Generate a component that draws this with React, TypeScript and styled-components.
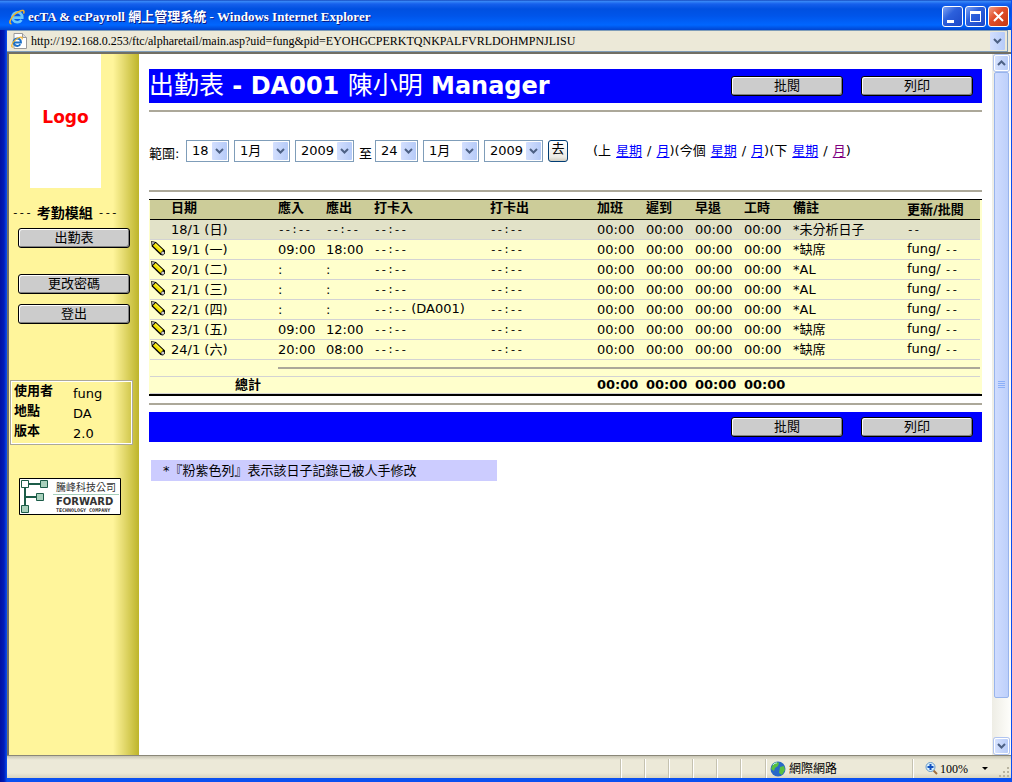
import React from "react";
import styled, { createGlobalStyle } from "styled-components";

const sans = `"DejaVu Sans", "Noto Sans CJK TC", sans-serif`;
const serif = `"Liberation Serif", "Noto Sans CJK TC", serif`;

const GlobalStyle = createGlobalStyle`
  * { box-sizing: border-box; }
  body { margin: 0; font: 13px/18px ${sans}; color: #000; background: #fff; }
  button, select { font: inherit; color: inherit; }
`;

const Window = styled.div`
  display: flex;
  flex-direction: column;
  min-height: 100vh;
  border: solid #0a2bd0;
  border-width: 0 1px 4px 7px;
  border-image: linear-gradient(90deg, #0010a0 0, #001cb8 4px, #0a50f0 7px, #0a50f0 100%) 0 1 4 7;
  background: #ece9d8;
`;

const TitleBar = styled.header`
  display: flex;
  align-items: center;
  gap: 2px;
  height: 30px;
  margin-left: -7px;
  padding: 3px 2px 0 9px;
  background: linear-gradient(#0831a8 0, #3b8cf8 1px, #1660ec 4px, #0050e0 9px, #0055ea 16px, #0066ff 25px, #0045d0 30px);
`;

const WindowTitle = styled.h1`
  flex: 1;
  margin: 0;
  padding-left: 1px;
  font: bold 13px/18px ${serif};
  color: #fff;
  text-shadow: 1px 1px #0a1883;
  white-space: nowrap;
`;

const CaptionButton = styled.button<{ $danger?: boolean }>`
  display: flex;
  width: 21px;
  height: 21px;
  padding: 0;
  border: 1px solid #fff;
  border-radius: 3px;
  background: ${(p) =>
    p.$danger
      ? "linear-gradient(135deg, #f0a088, #e2502c 40%, #c83810)"
      : "linear-gradient(135deg, #7ea4f4, #2c60dc 40%, #1c48c8)"};
`;

const AddressBar = styled.div`
  display: flex;
  align-items: center;
  gap: 4px;
  height: 22px;
  margin-right: 3px;
  padding: 0 2px 0 4px;
  border: solid #7f9db9;
  border-width: 1px 1px 1px 0;
  font: 12px/16px ${serif};
`;

const Url = styled.span`
  flex: 1;
  white-space: nowrap;
`;

const ArrowBox = styled.span`
  display: flex;
  align-items: center;
  justify-content: center;
  width: 15px;
  height: 18px;
  border-radius: 1px;
  background: linear-gradient(90deg, #d3dffe, #b6cbf8);
  pointer-events: none;
`;

const Body = styled.div`
  display: flex;
  flex: 1;
  border: solid #716f64;
  border-width: 2px 0 0 2px;
  background: #fff;
`;

const Sidebar = styled.nav`
  display: flex;
  flex-direction: column;
  align-items: flex-start;
  flex: none;
  width: 130px;
  background: linear-gradient(90deg, #fff59b 104px, #e6dc72 114px, #beb52a 130px);
`;

const LogoBox = styled.div`
  width: 71px;
  height: 134px;
  margin-left: 21px;
  background: #fff;
  color: #f00;
  font: bold 17px/126px ${sans};
  text-align: center;
`;

const Dashes = styled.span`
  font-family: "Liberation Mono", monospace;
  font-size: 11px;
  font-weight: normal;
`;

const ModuleHeading = styled.h2`
  display: flex;
  gap: 5px;
  margin: 16px 0 6px 3px;
  font-size: 14px;
  line-height: 18px;
`;

const PushButton = styled.button`
  width: 112px;
  height: 20px;
  padding: 0;
  border: 1px solid #000;
  border-radius: 3px;
  background: #ccc;
  box-shadow: inset 1px 1px #fff, inset -1px -1px #808080;
  font-size: 13px;
  line-height: 16px;
`;

const Menu = styled.div`
  display: flex;
  flex-direction: column;
  gap: 10px;
  margin-left: 9px;
  & > :first-child { margin-bottom: 16px; }
`;

const InfoBox = styled.dl`
  display: grid;
  grid-template-columns: 59px 1fr;
  grid-auto-rows: 20px;
  width: 123px;
  height: 65px;
  margin: 56px 0 33px 1px;
  padding: 1px 3px;
  border: 1px solid #aca899;
  box-shadow: inset 1px 1px #fff, inset -1px -1px #fff;
  & > dt { font-weight: bold; }
  & > dd { margin: 0; line-height: 24px; }
`;

const CompanyLogo = styled.svg`
  margin-left: 10px;
`;

const Main = styled.main`
  display: flex;
  flex-direction: column;
  flex: 1;
  min-width: 0;
  padding: 15px 10px;
`;

const Banner = styled.div<{ $tall?: boolean }>`
  display: flex;
  align-items: center;
  gap: 18px;
  height: ${(p) => (p.$tall ? 34 : 30)}px;
  padding-right: 9px;
  background: #00f;
`;

const PageTitle = styled.h2`
  flex: 1;
  margin: 0;
  color: #fff;
  font-size: 24px;
  line-height: 30px;
  white-space: nowrap;
  & > span { font-size: 25px; font-weight: normal; }
`;

const Rule = styled.hr`
  width: 100%;
  height: 2px;
  margin: 7px 0;
  border: 0;
  background: #aca899;
`;

const RangeForm = styled.form`
  display: flex;
  align-items: center;
  gap: 5px;
  height: 22px;
  margin: 21px 0;
  white-space: nowrap;
`;

const RangeText = styled.label<{ $width: number }>`
  width: ${(p) => p.$width}px;
  padding-top: 5px;
`;

const SelectFrame = styled.span<{ $width: number }>`
  display: inline-grid;
  align-items: center;
  width: ${(p) => p.$width}px;
  border: 1px solid #7f9db9;
  & > * { grid-area: 1 / 1; }
  & > span { justify-self: end; margin-right: 1px; }
  & > select {
    appearance: none;
    height: 20px;
    padding: 0 0 0 5px;
    border: 0;
    background: #fff;
  }
`;

const GoButton = styled.button`
  width: 20px;
  height: 22px;
  padding: 0 0 4px;
  border: 1px solid #003c74;
  border-radius: 3px;
  background: linear-gradient(#fff, #ecebe5 80%, #d0cdc0);
  line-height: 16px;
`;

const Shortcuts = styled.div`
  display: flex;
  margin-left: 20px;
  & > span { display: flex; gap: 5px; }
`;

const Link = styled.a<{ $visited?: boolean }>`
  color: ${(p) => (p.$visited ? "#800080" : "#00f")};
  text-underline-offset: 2px;
`;

const Sheet = styled.table`
  width: 100%;
  table-layout: fixed;
  border-spacing: 0;
  padding: 0 2px 0 1px;
  border: solid #000;
  border-width: 1px 0 2px;
  background: #ffc;
  line-height: 17px;
  white-space: nowrap;
  & td, & th {
    height: 20px;
    padding: 0;
    border-bottom: 1px solid #d3d3d3;
    text-align: left;
  }
  & svg { display: block; }
`;

const HeadRow = styled.tr`
  background: #cc9;
  & > th {
    border-bottom-color: #000;
    line-height: 16px;
    vertical-align: top;
  }
  & > th:last-child { line-height: 19px; }
`;

const DayRow = styled.tr<{ $rest?: boolean }>`
  background: ${(p) => (p.$rest ? "#e2e2c8" : "transparent")};
  & > td:first-child { padding: 1px 0 0 1px; vertical-align: top; }
`;

const SumRow = styled.tr`
  & > td, & > th { height: 17px; line-height: 16px; font-weight: bold; }
  & > th { padding-right: 17px; text-align: right; }
  & > td > hr { margin: 0; }
`;

const Note = styled.p`
  width: 346px;
  max-width: 100%;
  margin: 18px 0 0 2px;
  padding-left: 12px;
  background: #ccf;
  line-height: 21px;
`;

const ScrollTrack = styled.div`
  display: flex;
  flex-direction: column;
  flex: none;
  width: 19px;
  padding: 1px 2px 1px 2px;
  background: linear-gradient(90deg, #eeede5, #fefefb);
`;

const ScrollButton = styled.button`
  display: flex;
  align-items: center;
  justify-content: center;
  height: 16px;
  padding: 0;
  border: 1px solid #fff;
  border-radius: 2px;
  background: linear-gradient(90deg, #d6e2fe, #b8ccf8);
  box-shadow: 0 0 0 1px #b0c4f0;
`;

const ScrollRoom = styled.div`
  flex: 1;
  padding-top: 1px;
`;

const Thumb = styled.div`
  display: flex;
  align-items: center;
  justify-content: center;
  height: 94%;
  border: 1px solid #98b4ec;
  border-radius: 2px;
  background: linear-gradient(90deg, #d0dcfe, #bdd0fb);
`;

const StatusBar = styled.footer`
  display: flex;
  align-items: stretch;
  justify-content: flex-end;
  height: 23px;
  padding-top: 3px;
  border-top: 1px solid #8a8778;
  background: linear-gradient(#c8c5b4, #ece9d8 4px, #ece9d8 17px, #d8d4c0);
  font: 12px/18px ${serif};
`;

const StatusCell = styled.div<{ $width: number }>`
  display: flex;
  align-items: center;
  gap: 3px;
  width: ${(p) => p.$width}px;
  padding-left: 4px;
  border-left: 1px solid #c5c2b0;
  box-shadow: inset 1px 0 #fff;
`;

const Zoom = styled(StatusCell)`
  gap: 2px;
  padding-left: 12px;
  & > :nth-child(3) { margin-left: 12px; }
  & > :last-child { align-self: flex-end; margin-left: 9px; }
`;

const Chevron = ({ up }: { up?: boolean }) => (
  <svg width="9" height="6" viewBox="0 0 9 6">
    <path d={up ? "M1 5 4.500 1.500 8 5" : "M1 1 4.500 4.500 8 1"} fill="none" stroke="#4d6185" strokeWidth="2" />
  </svg>
);

const IeMark = ({ size, page }: { size: number; page?: boolean }) => (
  <svg width={size} height={size} viewBox="0 0 16 16">
    {page && <path d="M3 .5h8.500l4 4v11H3z" fill="#fff" stroke="#9a9a9a" />}
    {page && <path d="M11.500 .5v4h4" fill="#ddd" stroke="#9a9a9a" />}
    <g transform={page ? "translate(0 3) scale(.75)" : undefined}>
      <path
        d="M12.500 11a5 5 0 1 1 .8-2.400H4.500"
        fill="none"
        stroke={page ? "#1c70c8" : "#6cc8fa"}
        strokeWidth="2.600"
      />
      <path d="M2.500 14.800C-.5 15 1 9.500 5.500 5.500S15 .2 15 2.800c0 .6-.2 1.200-.5 1.800" fill="none" stroke="#f4b428" strokeWidth="1.500" />
    </g>
  </svg>
);

const Pencil = () => (
  <svg width="15" height="15" viewBox="0 0 15 15">
    <path d="M0 0 5 1 14 9.500v3L12 14.500 9.500 14 .8 5.500z" fill="#000" />
    <path d="M.5 .5 4 1.500 1.500 4z" fill="#aaa" />
    <path d="M4.800 2 12 9 9.500 12 1.900 4.800z" fill="#f0e000" />
    <path d="M4.200 2.800 11.300 9.700" stroke="#fffb60" />
    <circle cx="11.800" cy="12" r="1.600" fill="#c8c8c8" />
  </svg>
);

const Select = ({ id, value, width }: { id: string; value: string; width: number }) => (
  <SelectFrame $width={width}>
    <select id={id} aria-label={id} defaultValue={value}>
      <option>{value}</option>
    </select>
    <ArrowBox>
      <Chevron />
    </ArrowBox>
  </SelectFrame>
);

const Actions = () => (
  <>
    <PushButton type="button">批閱</PushButton>
    <PushButton type="button">列印</PushButton>
  </>
);

const columns = [21, 107, 48, 48, 116, 107, 49, 49, 49, 49, 0, 73];
const heads = ["", "日期", "應入", "應出", "打卡入", "打卡出", "加班", "遲到", "早退", "工時", "備註", "更新/批閱"];
const zero = "00:00";
const none = <Dashes>--:--</Dashes>;
const byFung = <>fung/ <Dashes>--</Dashes></>;
const days = [
  { date: "18/1 (日)", from: none, to: none, remark: "*未分析日子", by: <Dashes>--</Dashes> },
  { date: "19/1 (一)", from: "09:00", to: "18:00", remark: "*缺席", by: byFung },
  { date: "20/1 (二)", from: ":", to: ":", remark: "*AL", by: byFung },
  { date: "21/1 (三)", from: ":", to: ":", remark: "*AL", by: byFung },
  { date: "22/1 (四)", from: ":", to: ":", terminal: " (DA001)", remark: "*AL", by: byFung },
  { date: "23/1 (五)", from: "09:00", to: "12:00", remark: "*缺席", by: byFung },
  { date: "24/1 (六)", from: "20:00", to: "08:00", remark: "*缺席", by: byFung },
];

export default function App() {
  return (
    <>
      <GlobalStyle />
      <Window>
        <TitleBar>
          <IeMark size={16} />
          <WindowTitle>ecTA &amp; ecPayroll 網上管理系統 - Windows Internet Explorer</WindowTitle>
          <CaptionButton aria-label="Minimize">
            <svg width="19" height="19"><path d="M4 13h7v3H4z" fill="#fff" /></svg>
          </CaptionButton>
          <CaptionButton aria-label="Maximize">
            <svg width="19" height="19"><path d="M4 4h11v11H4zM5 7v7h9V7z" fill="#fff" fillRule="evenodd" /></svg>
          </CaptionButton>
          <CaptionButton aria-label="Close" $danger>
            <svg width="19" height="19"><path d="M5 5l9 9M14 5l-9 9" stroke="#fff" strokeWidth="2" /></svg>
          </CaptionButton>
        </TitleBar>
        <AddressBar>
          <IeMark size={16} page />
          <Url>http://192.168.0.253/ftc/alpharetail/main.asp?uid=fung&amp;pid=EYOHGCPERKTQNKPALFVRLDOHMPNJLISU</Url>
          <ArrowBox><Chevron /></ArrowBox>
        </AddressBar>
        <Body>
          <Sidebar>
            <LogoBox>Logo</LogoBox>
            <ModuleHeading><Dashes>---</Dashes>考勤模組<Dashes>---</Dashes></ModuleHeading>
            <Menu>
              <PushButton type="button">出勤表</PushButton>
              <PushButton type="button">更改密碼</PushButton>
              <PushButton type="button">登出</PushButton>
            </Menu>
            <InfoBox>
              <dt>使用者</dt><dd>fung</dd>
              <dt>地點</dt><dd>DA</dd>
              <dt>版本</dt><dd>2.0</dd>
            </InfoBox>
            <CompanyLogo width="102" height="37" viewBox="0 0 102 37">
              <path d="M.5 .5h101v36H.5z" fill="#fff" stroke="#000" />
              <path d="M6 6h18M6 6v25M6 19h14" stroke="#1c5c48" strokeWidth="2" fill="none" />
              <g fill="#a8d0bc" stroke="#1c5c48">
                <path d="M2.500 2.500h7v7h-7z" fill="#fff" />
                <path d="M21.500 2.500h7v7h-7zM17.500 15.500h7v7h-7zM2.500 27.500h7v7h-7z" />
              </g>
              <path d="M34 16.500h66" stroke="#a8d0bc" />
              <text x="37" y="13" fontSize="10" fontFamily="Noto Sans CJK TC, sans-serif" fill="#333">騰峰科技公司</text>
              <text x="37" y="27" fontSize="10" fontFamily="DejaVu Sans, sans-serif" fontWeight="bold" fill="#333">FORWARD</text>
              <text x="37" y="34" fontSize="5" fontFamily="DejaVu Sans Mono, monospace" fontWeight="bold" fill="#333">TECHNOLOGY COMPANY</text>
            </CompanyLogo>
          </Sidebar>
          <Main>
            <Banner $tall>
              <PageTitle><span>出勤表</span> - DA001 <span>陳小明</span> Manager</PageTitle>
              <Actions />
            </Banner>
            <Rule />
            <RangeForm>
              <RangeText htmlFor="from-day" $width={32}>範圍:</RangeText>
              <Select id="from-day" value="18" width={43} />
              <Select id="from-month" value="1月" width={56} />
              <Select id="from-year" value="2009" width={59} />
              <RangeText htmlFor="to-day" $width={11}>至</RangeText>
              <Select id="to-day" value="24" width={43} />
              <Select id="to-month" value="1月" width={56} />
              <Select id="to-year" value="2009" width={59} />
              <GoButton type="button">去</GoButton>
              <Shortcuts>
                <span>(上 <Link href="#last-week">星期</Link> / <Link href="#last-month">月</Link></span>
                <span>)(今個 <Link href="#week">星期</Link> / <Link href="#month">月</Link></span>
                <span>)(下 <Link href="#next-week">星期</Link> / <Link href="#next-month" $visited>月</Link></span>)
              </Shortcuts>
            </RangeForm>
            <Rule />
            <Sheet>
              <colgroup>
                {columns.map((w, i) => <col key={i} width={w || undefined} />)}
              </colgroup>
              <thead>
                <HeadRow>{heads.map((h, i) => <th key={i}>{h}</th>)}</HeadRow>
              </thead>
              <tbody>
                {days.map((d, i) => (
                  <DayRow key={d.date} $rest={i === 0}>
                    <td>{i > 0 && <Pencil />}</td>
                    <td>{d.date}</td>
                    <td>{d.from}</td>
                    <td>{d.to}</td>
                    <td>{none}{d.terminal}</td>
                    <td>{none}</td>
                    <td>{zero}</td>
                    <td>{zero}</td>
                    <td>{zero}</td>
                    <td>{zero}</td>
                    <td>{d.remark}</td>
                    <td>{d.by}</td>
                  </DayRow>
                ))}
              </tbody>
              <tfoot>
                <SumRow><td colSpan={2} /><td colSpan={10}><Rule /></td></SumRow>
                <SumRow>
                  <th colSpan={2} scope="row">總計</th>
                  <td colSpan={4} />
                  <td>{zero}</td>
                  <td>{zero}</td>
                  <td>{zero}</td>
                  <td>{zero}</td>
                  <td colSpan={2} />
                </SumRow>
              </tfoot>
            </Sheet>
            <Rule />
            <Banner>
              <PageTitle />
              <Actions />
            </Banner>
            <Note>*『粉紫色列』表示該日子記錄已被人手修改</Note>
          </Main>
          <ScrollTrack>
            <ScrollButton aria-label="Scroll up"><Chevron up /></ScrollButton>
            <ScrollRoom>
              <Thumb>
                <svg width="7" height="8"><path d="M0 .5h7M0 2.500h7M0 4.500h7M0 6.500h7" stroke="#8cb0f8" /></svg>
              </Thumb>
            </ScrollRoom>
            <ScrollButton aria-label="Scroll down"><Chevron /></ScrollButton>
          </ScrollTrack>
        </Body>
        <StatusBar>
          {[24, 24, 24, 24, 24, 25].map((w, i) => <StatusCell key={i} $width={w} />)}
          <StatusCell $width={147}>
            <svg width="16" height="16" viewBox="0 0 16 16">
              <circle cx="8" cy="8" r="7.500" fill="#2868c8" />
              <path d="M3 3c2-2 5-2 6-1L8 5 5 7 4 10 1 8zM10 6l4-1 1 4-3 5-3-2z" fill="#58c040" />
              <path d="M3 4c1-2 3-2 4-2" stroke="#b8e8f8" fill="none" />
            </svg>
            網際網路
          </StatusCell>
          <Zoom $width={99}>
            <svg width="13" height="13" viewBox="0 0 13 13">
              <path d="M8 8l4 4" stroke="#a07040" strokeWidth="2" />
              <circle cx="5.500" cy="5" r="4.500" fill="#d8f0fc" stroke="#6898c8" />
              <path d="M5.500 2v6M2.500 5h6" stroke="#1050c0" strokeWidth="2" />
            </svg>
            <span>100%</span>
            <svg width="6" height="3"><path d="M0 0h6L3 3z" /></svg>
            <svg width="11" height="11">
              <path d="M8 0h2v2h-2zM4 4h2v2h-2zM8 4h2v2h-2zM0 8h2v2h-2zM4 8h2v2h-2zM8 8h2v2h-2z" fill="#b8b4a0" />
            </svg>
          </Zoom>
        </StatusBar>
      </Window>
    </>
  );
}
